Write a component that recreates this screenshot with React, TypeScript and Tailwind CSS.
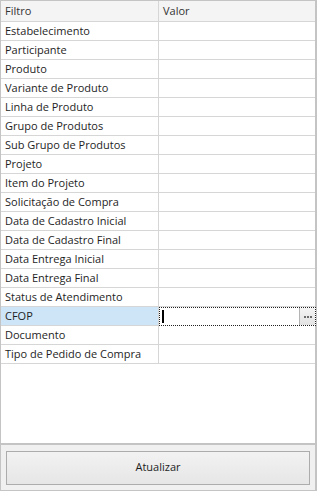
import React from 'react';

const filtros = [
  'Estabelecimento',
  'Participante',
  'Produto',
  'Variante de Produto',
  'Linha de Produto',
  'Grupo de Produtos',
  'Sub Grupo de Produtos',
  'Projeto',
  'Item do Projeto',
  'Solicitação de Compra',
  'Data de Cadastro Inicial',
  'Data de Cadastro Final',
  'Data Entrega Inicial',
  'Data Entrega Final',
  'Status de Atendimento',
  'CFOP',
  'Documento',
  'Tipo de Pedido de Compra',
];

export default function App() {
  return (
    <div
      className="w-[317px] h-[491px] flex flex-col bg-[#f0f0f0] border border-r-2 border-[#c4c4c4] text-[11px] text-[#1e1e1e]"
      style={{ fontFamily: '"Open Sans", "DejaVu Sans", sans-serif' }}
    >
      {/* Grid */}
      <div className="flex-1 flex flex-col bg-white border-b-2 border-[#c4c4c4]">
        <div className="flex h-[21px] shrink-0 bg-[#f4f4f4] border-b border-[#d6d6d6] text-[#333]">
          <div className="w-[158px] pl-[4px] flex items-center border-r border-[#d6d6d6]">Filtro</div>
          <div className="flex-1 pl-[4px] flex items-center">Valor</div>
        </div>
        {filtros.map((f) => {
          const selected = f === 'CFOP';
          return (
            <div key={f} className="flex h-[19px] shrink-0 border-b border-[#d6d6d6]">
              <div
                className={`w-[158px] pl-[4px] flex items-center border-r border-[#d6d6d6] whitespace-nowrap ${
                  selected ? 'bg-[#cde5f7]' : ''
                }`}
              >
                {f}
              </div>
              <div className="flex-1 relative">
                {selected && (
                  <div className="absolute left-[0px] right-[-1px] top-0 bottom-[-1px] flex border border-dotted border-[#222] bg-white">
                    <div className="flex-1 flex items-center pl-[2px]">
                      <div className="w-[2px] h-[13px] bg-black" />
                    </div>
                    <div className="w-[16px] flex items-center justify-center gap-[1px] border-l border-[#b4b4b4] bg-gradient-to-b from-[#f4f4f4] to-[#e2e2e2]">
                      <div className="w-[2px] h-[2px] bg-[#6a6a6a]" />
                      <div className="w-[2px] h-[2px] bg-[#6a6a6a]" />
                      <div className="w-[2px] h-[2px] bg-[#6a6a6a]" />
                    </div>
                  </div>
                )}
              </div>
            </div>
          );
        })}
      </div>

      {/* Rodapé */}
      <div className="h-[45px] shrink-0 flex items-center px-[5px]">
        <button className="w-full h-[34px] border border-[#acacac] bg-gradient-to-b from-[#f2f2f2] to-[#e6e6e6] text-[11px] text-[#1e1e1e]">
          Atualizar
        </button>
      </div>
    </div>
  );
}
